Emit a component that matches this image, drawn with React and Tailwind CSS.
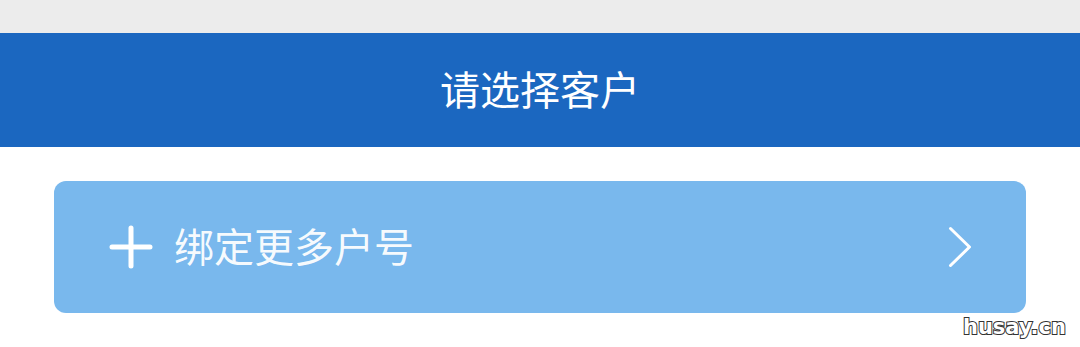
export default function App() {
  return (
    <div className="relative w-[1080px] h-[347px] bg-white overflow-hidden font-['Noto_Sans_CJK_SC','Noto_Sans',sans-serif]">
      {/* Status strip */}
      <div className="h-[33px] bg-[#ececec]" />

      {/* Header */}
      <header className="h-[114px] bg-[#1b67c0] flex items-center justify-center">
        <h1 className="text-[40px] leading-none text-white pb-[4px]">请选择客户</h1>
      </header>

      {/* Bind card */}
      <main className="px-[54px] pt-[34px]">
        <button className="w-full h-[132px] rounded-[12px] bg-[#79b8ed] flex items-center pl-[55px] pr-[54px] text-white">
          <svg viewBox="0 0 44 44" className="w-[44px] h-[44px] mr-[21px]" fill="none" stroke="currentColor" strokeWidth="5" strokeLinecap="round">
            <path d="M22 3v38M3 22h38" />
          </svg>
          <span className="text-[40px] leading-none text-white/95 pb-[4px]">绑定更多户号</span>
          <svg viewBox="0 0 24 42" className="ml-auto w-[24px] h-[42px]" fill="none" stroke="currentColor" strokeWidth="3" strokeLinecap="round" strokeLinejoin="round">
            <path d="M2.5 2.5 21.5 21 2.5 39.5" />
          </svg>
        </button>
      </main>

      {/* Watermark */}
      <span className="absolute right-[14px] bottom-[9px] text-[21px] font-bold leading-none text-white font-['DejaVu_Sans',sans-serif] [-webkit-text-stroke:2px_#333] [paint-order:stroke_fill]">
        husay.cn
      </span>
    </div>
  );
}
